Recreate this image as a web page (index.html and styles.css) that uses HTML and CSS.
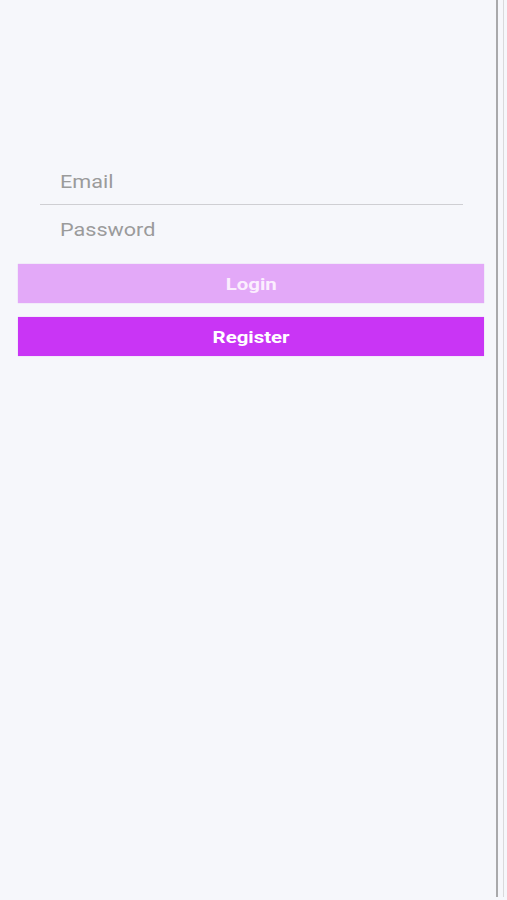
FILE: index.html
```html
<!DOCTYPE html>
<html lang="en">
<head>
<meta charset="utf-8">
<title>Login</title>
<link rel="stylesheet" href="styles.css">
</head>
<body>
<div class="page">
  <main class="main">
    <form class="form">
      <div class="field field-email"><span class="wide">Email</span></div>
      <div class="field field-password"><span class="wide">Password</span></div>
      <button type="button" class="btn btn-login"><span class="wide">Login</span></button>
      <button type="button" class="btn btn-register"><span class="wide">Register</span></button>
    </form>
  </main>
  <div class="rail"><div class="rail-dark"></div><div class="rail-light"></div></div>
</div>
</body>
</html>
```
FILE: styles.css
```css
html, body {
  margin: 0;
  padding: 0;
  background: #f6f7fb;
}
body {
  font-family: Roboto, "Liberation Sans", sans-serif;
}
.page {
  display: flex;
  height: 900px;
  width: 507px;
}
.main {
  flex: 1;
  padding-top: 159px;
}
.form {
  display: flex;
  flex-direction: column;
}
.wide {
  display: inline-block;
  transform: scaleX(1.2);
}
.field {
  display: flex;
  align-items: center;
  margin: 0 33px 0 40px;
  padding-left: 20px;
  font-size: 18px;
  color: #9b9b9b;
}
.field .wide {
  transform-origin: left center;
}
.field-email {
  height: 45px;
  border-bottom: 1px solid #cfcfd3;
}
.field-password {
  height: 49px;
}
.btn {
  display: flex;
  align-items: center;
  justify-content: center;
  height: 39px;
  margin: 0 12px 0 18px;
  border: none;
  padding: 0;
  font-family: Roboto, "Liberation Sans", sans-serif;
  font-size: 17px;
  font-weight: 700;
  color: #ffffff;
  box-shadow: 0 0 1px rgba(180, 60, 220, 0.35);
}
.btn-login {
  margin-top: 10px;
  background: #e3a9f8;
  color: #fbeefe;
}
.btn-register {
  margin-top: 14px;
  background: #c935f5;
}
.rail {
  width: 11px;
  height: 897px;
  display: flex;
  gap: 5px;
}
.rail-dark {
  width: 2px;
  background: #a9a9ab;
}
.rail-light {
  width: 1px;
  background: #d9d9db;
}
```
